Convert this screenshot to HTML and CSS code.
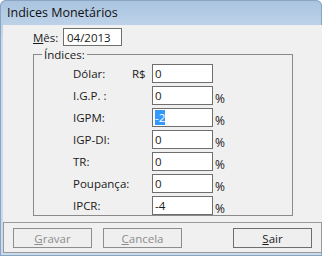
FILE: index.html
```html
<!DOCTYPE html>
<html lang="pt">
<head>
    <meta charset="UTF-8">
    <title>Indices Monetários</title>
    <link rel="stylesheet" href="styles.css">
</head>
<body>
    <div class="window">
        <div class="titlebar">Indices Monetários</div>
        <div class="client">
            <div class="month-row">
                <span class="month-label"><u>M</u>ês:</span>
                <span class="field month-field">04/2013</span>
            </div>

            <fieldset class="group">
                <legend>Índices:</legend>
                <div class="rows">
                    <span class="name">Dólar:</span>
                    <span class="prefix">R$</span>
                    <span class="field">0</span>
                    <span class="suffix"></span>

                    <span class="name">I.G.P. :</span>
                    <span class="prefix"></span>
                    <span class="field">0</span>
                    <span class="suffix">%</span>

                    <span class="name">IGPM:</span>
                    <span class="prefix"></span>
                    <span class="field"><span class="selected">-2</span></span>
                    <span class="suffix">%</span>

                    <span class="name">IGP-DI:</span>
                    <span class="prefix"></span>
                    <span class="field">0</span>
                    <span class="suffix">%</span>

                    <span class="name">TR:</span>
                    <span class="prefix"></span>
                    <span class="field">0</span>
                    <span class="suffix">%</span>

                    <span class="name">Poupança:</span>
                    <span class="prefix"></span>
                    <span class="field">0</span>
                    <span class="suffix">%</span>

                    <span class="name">IPCR:</span>
                    <span class="prefix"></span>
                    <span class="field">-4</span>
                    <span class="suffix">%</span>
                </div>
            </fieldset>

            <div class="actions">
                <button class="btn disabled"><u>G</u>ravar</button>
                <button class="btn disabled"><u>C</u>ancela</button>
                <button class="btn exit"><u>S</u>air</button>
            </div>
        </div>
    </div>
</body>
</html>
```

FILE: styles.css
```css
body {
    margin: 0;
    background: #ffffff;
    font-family: "Open Sans", "Noto Sans", sans-serif;
    font-size: 11.5px;
    color: #1a1a1a;
}

.window {
    width: 322px;
    height: 256px;
    background: linear-gradient(#a9c3df, #c9dbee 40px, #c9dbee);
    border-radius: 6px 6px 0 0;
    box-shadow: inset 0 0 0 1px #8aa5c2;
    overflow: hidden;
}

.titlebar {
    height: 25px;
    line-height: 25px;
    padding-left: 7px;
    font-size: 12.5px;
    color: #111;
}

.client {
    margin-left: 3px;
    width: 319px;
    height: 228px;
    background: #f0f0f0;
}

.month-row {
    display: flex;
    align-items: center;
    padding: 3px 0 0 30px;
}

.month-label {
    width: 30px;
}

.field {
    display: flex;
    align-items: center;
    box-sizing: border-box;
    height: 19px;
    padding-left: 2px;
    background: #fff;
    border: 1px solid #6e6e6e;
}

.month-field {
    width: 59px;
    height: 18px;
    padding-left: 3px;
}

.group {
    margin: 1px 0 0 30px;
    width: 260px;
    height: 169px;
    box-sizing: border-box;
    padding: 0;
    border: 1px solid #8a8a8a;
}

.group legend {
    margin-left: 8px;
    padding: 0 2px;
    line-height: 15px;
}

.rows {
    display: grid;
    grid-template-columns: 59px 20px 61px auto;
    grid-auto-rows: 19px;
    row-gap: 3px;
    padding: 2px 0 0 39px;
    align-items: center;
}

.suffix {
    padding: 6px 0 0 2px;
    font-size: 12px;
}

.selected {
    background: #3399ff;
    color: #fff;
}

.actions {
    display: flex;
    margin-top: 6px;
    height: 31px;
    box-sizing: border-box;
    border: 1px solid #9a9a9a;
    padding: 5px 0 0 9px;
}

.btn {
    width: 79px;
    height: 20px;
    padding: 0;
    background: #efefef;
    border: 1px solid #6e6e6e;
    font-family: inherit;
    font-size: 11.5px;
    color: #1a1a1a;
}

.btn + .btn {
    margin-left: 11px;
}

.btn.exit {
    margin-left: 51px;
}

.btn.disabled {
    color: #8d8d8d;
    border-color: #8d8d8d;
}
```
